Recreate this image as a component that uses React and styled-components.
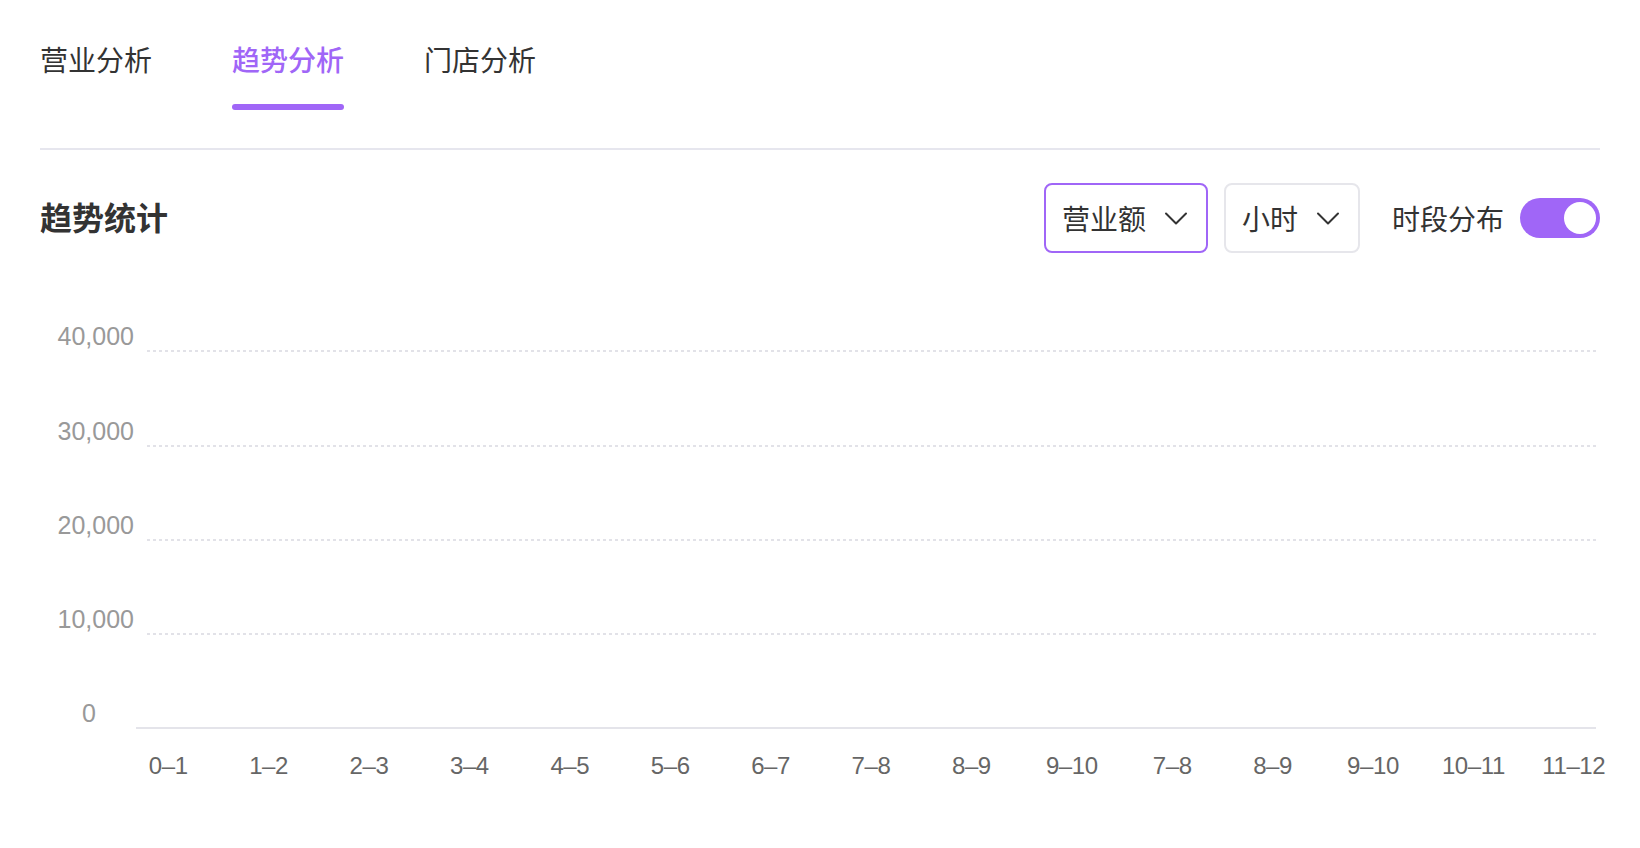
import React from 'react';
import styled, { createGlobalStyle } from 'styled-components';

const GlobalStyle = createGlobalStyle`
  html, body {
    margin: 0;
    padding: 0;
    background: #fff;
  }
  body {
    font-family: "Liberation Sans", "Noto Sans CJK SC", sans-serif;
    color: #333;
  }
`;

const Page = styled.div`
  width: 1640px;
  height: 848px;
  box-sizing: border-box;
  padding: 0 40px;
  overflow: hidden;
`;

const TabBar = styled.div`
  display: flex;
  gap: 80px;
  padding-top: 42px;
  padding-bottom: 38px;
  border-bottom: 2px solid #e6e6ee;
`;

const Tab = styled.div`
  display: flex;
  flex-direction: column;
  align-items: stretch;
  font-size: 28px;
  line-height: 40px;
  font-weight: ${(p) => (p.active ? 500 : 400)};
  color: ${(p) => (p.active ? '#a066f7' : '#333')};
  cursor: pointer;

  &::after {
    content: '';
    display: block;
    height: 6px;
    margin-top: 22px;
    border-radius: 3px;
    background: ${(p) => (p.active ? '#a066f7' : 'transparent')};
  }
`;

const Header = styled.div`
  display: flex;
  align-items: center;
  justify-content: space-between;
  height: 70px;
  margin-top: 33px;
`;

const Title = styled.h2`
  margin: 0 0 4px;
  font-size: 32px;
  font-weight: 700;
  color: #333;
`;

const Controls = styled.div`
  display: flex;
  align-items: center;
`;

const Select = styled.div`
  display: flex;
  align-items: center;
  gap: 18px;
  height: 70px;
  box-sizing: border-box;
  padding: 0 18px 0 16px;
  margin-left: ${(p) => p.offset || 0}px;
  border: 2px solid ${(p) => (p.focused ? '#a066f7' : '#e6e6eb')};
  border-radius: 8px;
  font-size: 28px;
  color: #333;
  cursor: pointer;
`;

const ToggleLabel = styled.span`
  margin-left: 32px;
  font-size: 28px;
  color: #333;
`;

const Toggle = styled.div`
  display: flex;
  align-items: center;
  justify-content: ${(p) => (p.on ? 'flex-end' : 'flex-start')};
  width: 80px;
  height: 40px;
  box-sizing: border-box;
  padding: 0 4px;
  margin-left: 16px;
  border-radius: 20px;
  background: ${(p) => (p.on ? '#a066f7' : '#ddd')};
  cursor: pointer;

  &::after {
    content: '';
    width: 32px;
    height: 32px;
    border-radius: 50%;
    background: #fff;
  }
`;

const Chart = styled.div`
  margin-top: 5px;
`;

const GridRow = styled.div`
  display: flex;
  align-items: flex-end;
  height: 94.25px;
`;

const YLabel = styled.span`
  width: ${(p) => (p.axis ? 56 : 94)}px;
  margin-right: ${(p) => (p.axis ? 38 : 0)}px;
  margin-bottom: 2px;
  text-align: right;
  font-size: 25px;
  line-height: 28px;
  color: #999;
`;

const GridLine = styled.div`
  flex: 1;
  height: 2px;
  margin-left: ${(p) => (p.axis ? 2 : 13)}px;
  margin-right: 4px;
  background: ${(p) =>
    p.axis
      ? '#e4e4ea'
      : 'linear-gradient(to right, #e2e2e8 50%, transparent 50%) 0 0 / 6px 2px repeat-x'};
`;

const XAxis = styled.div`
  display: grid;
  grid-template-columns: repeat(15, 1fr);
  width: 1506px;
  margin-left: 78px;
  margin-top: 23px;
`;

const XLabel = styled.span`
  text-align: center;
  font-size: 24px;
  line-height: 28px;
  letter-spacing: -0.4px;
  color: #666;
  white-space: nowrap;
`;

const Chevron = () => (
  <svg width="24" height="24" viewBox="0 0 24 24" fill="none">
    <path d="M2 7.5 L12 17.5 L22 7.5" stroke="#333" strokeWidth="2" strokeLinejoin="round" strokeLinecap="round" />
  </svg>
);

const tabs = ['营业分析', '趋势分析', '门店分析'];
const yTicks = ['40,000', '30,000', '20,000', '10,000', '0'];
const xTicks = ['0–1', '1–2', '2–3', '3–4', '4–5', '5–6', '6–7', '7–8', '8–9', '9–10', '7–8', '8–9', '9–10', '10–11', '11–12'];

const App = () => {
  return (
    <Page>
      <GlobalStyle />
      <TabBar>
        {tabs.map((t, i) => (
          <Tab key={t} active={i === 1}>{t}</Tab>
        ))}
      </TabBar>

      <Header>
        <Title>趋势统计</Title>
        <Controls>
          <Select focused>
            营业额
            <Chevron />
          </Select>
          <Select offset={16}>
            小时
            <Chevron />
          </Select>
          <ToggleLabel>时段分布</ToggleLabel>
          <Toggle on />
        </Controls>
      </Header>

      <Chart>
        {yTicks.map((v, i) => {
          const axis = i === yTicks.length - 1;
          return (
            <GridRow key={v}>
              <YLabel axis={axis}>{v}</YLabel>
              <GridLine axis={axis} />
            </GridRow>
          );
        })}
        <XAxis>
          {xTicks.map((x, i) => (
            <XLabel key={i}>{x}</XLabel>
          ))}
        </XAxis>
      </Chart>
    </Page>
  );
};

export default App;
